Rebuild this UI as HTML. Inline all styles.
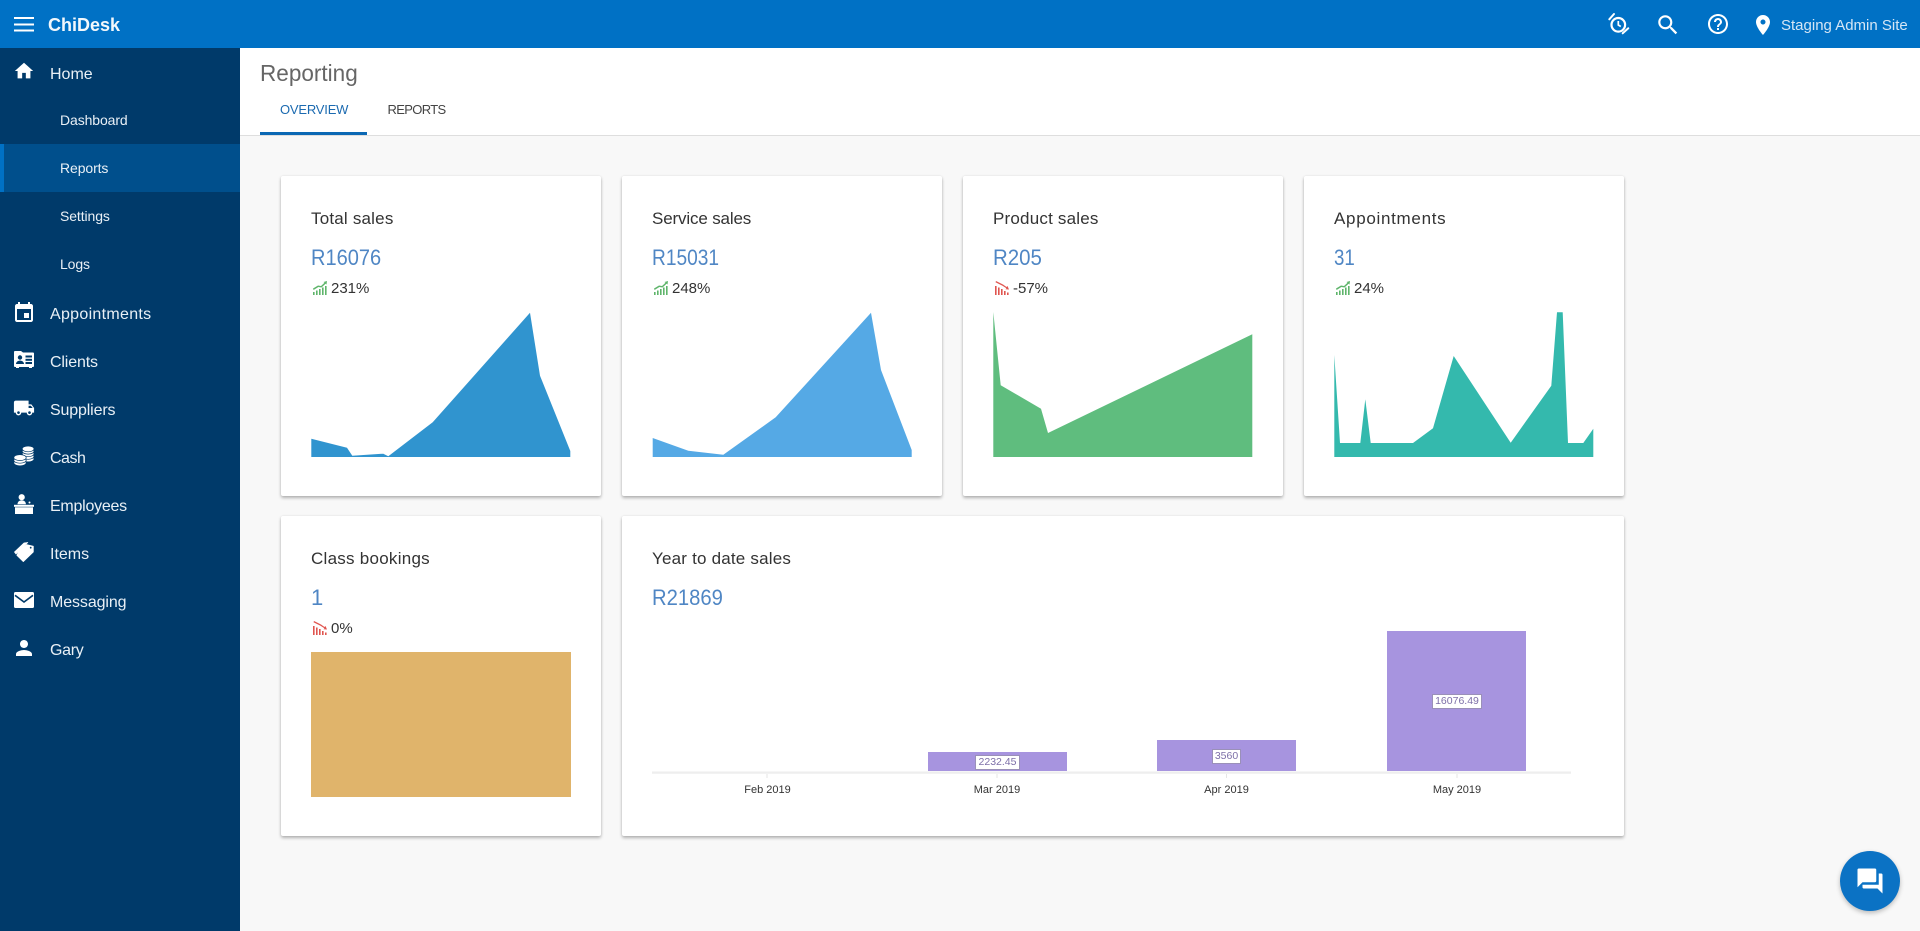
<!DOCTYPE html>
<html lang="en">
<head>
<meta charset="utf-8">
<title>ChiDesk - Reporting</title>
<style>
*{box-sizing:border-box}
html,body{margin:0;padding:0;width:1920px;height:931px;overflow:hidden;background:#f8f8f8;font-family:"Liberation Sans",sans-serif;color:#333}
a{text-decoration:none;color:inherit}
.abs,.t{position:absolute;white-space:nowrap}
header{position:absolute;left:0;top:0;width:1920px;height:48px;background:#0071c5;color:#fff}
.brand{left:48px;top:13px;font-size:18px;line-height:24px;font-weight:bold;color:#f2f8fc}
.site{left:1781px;top:14px;font-size:15px;line-height:24px;color:#d5e6f5}
header svg,nav svg{position:absolute;fill:#fff}
nav{position:absolute;left:0;top:48px;width:240px;height:883px;background:#003a6a;color:#e9f0f6}
nav a{position:absolute;left:0;width:240px;height:48px;line-height:48px}
nav a.m{font-size:16px;padding-left:50px;padding-top:3px}
nav a.s{font-size:14px;padding-left:60px;letter-spacing:-.1px}
nav a.on{background:#004f8c;border-left:4px solid #0071c5;padding-left:56px}
.head{position:absolute;left:240px;top:48px;width:1680px;height:88px;background:#fff;border-bottom:1px solid #dedede}
.title{left:20px;top:10px;font-size:23px;line-height:30px;color:#666;transform:scaleX(.98);transform-origin:left}
.tab{top:50px;font-size:13px;line-height:24px}
.tab.on{left:40px;color:#1b6ab0;letter-spacing:-.2px}
.tab.off{left:147.500px;color:#444;letter-spacing:-.65px}
.ul{left:20px;top:84px;width:107px;height:3px;background:#0b68b4}
.card{position:absolute;background:#fff;border-radius:2px;box-shadow:0 2px 3px rgba(0,0,0,.28),0 0 2px rgba(0,0,0,.08)}
.c1{top:176px;width:320px;height:320px}
.c2{top:516px;height:320px}
.card h3{position:absolute;left:30px;top:33px;margin:0;font-size:17px;line-height:20px;font-weight:normal;color:#333;white-space:nowrap}
.val{position:absolute;left:30px;top:67px;font-size:22px;line-height:30px;color:#4f86c4;transform-origin:left;white-space:nowrap}
.chg{position:absolute;left:50px;top:103px;font-size:15px;line-height:20px;color:#333;white-space:nowrap}
.card svg.tr{position:absolute;left:32px;top:105px}
svg.over{position:absolute;left:0;top:0}
.lb{position:absolute;font-size:11px;line-height:14px;color:#333;text-align:center;width:80px;white-space:nowrap}
.bv{position:absolute;background:#fff;border:1px solid #9a90b8;font-size:10.500px;line-height:13px;height:15px;color:#7d6fa8;text-align:center;white-space:nowrap}
.fab{position:absolute;left:1840px;top:851px;width:60px;height:60px;border-radius:50%;background:#0b72c4;box-shadow:0 2px 5px rgba(0,0,0,.25)}
</style>
</head>
<body>

<header>
  <svg style="left:14px;top:17px" width="20" height="15" viewBox="0 0 20 15"><rect y="0" width="20" height="2"/><rect y="6.500" width="20" height="2"/><rect y="12.500" width="20" height="2"/></svg>
  <span class="t brand">ChiDesk</span>
  <svg style="left:1606px;top:12px;fill:none;stroke:#fff" width="24" height="24" viewBox="0 0 24 24" stroke-width="2.200"><circle cx="12.300" cy="12.800" r="6.800"/><path d="M12.300 9v4l2.500 1.500" stroke-width="1.700"/><path d="M3.300 7.300 8 2M16.700 21.300 22.300 16.300" stroke-width="2" stroke-linecap="round"/></svg>
  <svg style="left:1655px;top:12px" width="26" height="26" viewBox="0 0 24 24"><path d="M15.500 14h-.79l-.28-.27C15.410 12.590 16 11.110 16 9.500 16 5.910 13.090 3 9.500 3S3 5.910 3 9.500 5.910 16 9.500 16c1.610 0 3.090-.59 4.230-1.570l.27.28v.79l5 4.990L20.490 19l-4.990-5zm-6 0C7.010 14 5 11.990 5 9.500S7.010 5 9.500 5 14 7.010 14 9.500 11.990 14 9.500 14z"/></svg>
  <svg style="left:1706px;top:12px" width="24" height="24" viewBox="0 0 24 24"><path d="M11 18h2v-2h-2v2zm1-16C6.480 2 2 6.480 2 12s4.480 10 10 10 10-4.480 10-10S17.520 2 12 2zm0 18c-4.410 0-8-3.590-8-8s3.590-8 8-8 8 3.590 8 8-3.590 8-8 8zm0-14c-2.210 0-4 1.790-4 4h2c0-1.100.9-2 2-2s2 .9 2 2c0 2-3 1.750-3 5h2c0-2.250 3-2.500 3-5 0-2.210-1.790-4-4-4z"/></svg>
  <svg style="left:1751px;top:13px" width="24" height="24" viewBox="0 0 24 24"><path d="M12 2C8.130 2 5 5.130 5 9c0 5.250 7 13 7 13s7-7.750 7-13c0-3.870-3.130-7-7-7zm0 9.500c-1.380 0-2.500-1.120-2.500-2.500s1.120-2.500 2.500-2.500 2.500 1.120 2.500 2.500-1.120 2.500-2.500 2.500z"/></svg>
  <span class="t site">Staging Admin Site</span>
</header>

<nav>
  <a class="m" style="top:0">Home</a>
  <svg style="left:13.200px;top:12.200px" width="22" height="22" viewBox="0 0 24 24"><path d="M10 20v-6h4v6h5v-8h3L12 3 2 12h3v8z"/></svg>
  <a class="s" style="top:48px">Dashboard</a>
  <a class="s on" style="top:96px">Reports</a>
  <a class="s" style="top:144px">Settings</a>
  <a class="s" style="top:192px">Logs</a>

  <a class="m" style="top:240px;letter-spacing:.3px">Appointments</a>
  <svg style="left:12px;top:253px" width="24" height="24" viewBox="0 0 24 24"><path d="M17 12h-5v5h5v-5zM19 3h-1V1h-2v2H8V1H6v2H5c-1.110 0-1.990.9-1.990 2L3 19c0 1.100.89 2 2 2h14c1.100 0 2-.9 2-2V5c0-1.100-.9-2-2-2zm0 16H5V8h14v11z"/></svg>

  <a class="m" style="top:288px;letter-spacing:-.15px">Clients</a>
  <svg style="left:14px;top:303px" width="20" height="18" viewBox="0 0 20 18"><path d="M1 0h6l2 1.500h10c.6 0 1 .4 1 1V15c0 .6-.4 1-1 1h-1v1h-3v-1H5v1H2v-1H1c-.6 0-1-.4-1-1V1c0-.6.4-1 1-1z"/><g fill="#003a6a"><circle cx="6" cy="6.500" r="2.200"/><path d="M2 13c0-2.200 2-3.400 4-3.400s4 1.200 4 3.400z"/><rect x="11.500" y="4.500" width="6.500" height="2"/><rect x="11.500" y="7.800" width="6.500" height="2"/><rect x="11.500" y="11" width="6.500" height="2"/></g></svg>

  <a class="m" style="top:336px;letter-spacing:-.15px">Suppliers</a>
  <svg style="left:13px;top:349px" width="22" height="22" viewBox="0 0 24 24"><path d="M20 8h-3V4H3c-1.100 0-2 .9-2 2v11h2c0 1.660 1.340 3 3 3s3-1.340 3-3h6c0 1.660 1.340 3 3 3s3-1.340 3-3h2v-5l-3-4zM6 18.500c-.83 0-1.500-.67-1.500-1.500s.67-1.500 1.500-1.500 1.500.67 1.500 1.500-.67 1.500-1.500 1.500zm13.500-9l1.960 2.500H17V9.500h2.500zm-1.500 9c-.83 0-1.500-.67-1.500-1.500s.67-1.500 1.500-1.500 1.500.67 1.500 1.500-.67 1.500-1.500 1.500z"/></svg>

  <a class="m" style="top:384px;letter-spacing:-.5px">Cash</a>
  <svg style="left:14px;top:398px" width="20" height="20" viewBox="0 0 20 20" stroke="#003a6a" stroke-width=".7"><ellipse cx="14.100" cy="13" rx="5.900" ry="2.900"/><ellipse cx="14.100" cy="10.400" rx="5.900" ry="2.900"/><ellipse cx="14.100" cy="7.800" rx="5.900" ry="2.900"/><ellipse cx="14.100" cy="5.200" rx="5.900" ry="2.900"/><ellipse cx="14.100" cy="2.900" rx="5.900" ry="2.900"/><ellipse cx="6" cy="16.800" rx="6.200" ry="3"/><ellipse cx="6" cy="14.200" rx="6.200" ry="3"/><ellipse cx="6" cy="11.600" rx="6.200" ry="3"/></svg>

  <a class="m" style="top:432px;letter-spacing:-.25px">Employees</a>
  <svg style="left:14px;top:446px" width="20" height="20" viewBox="0 0 20 20"><circle cx="7.700" cy="3.200" r="3.100"/><path d="M3.500 10.300c0-2.600 1.800-3.900 4.200-3.900s4.200 1.300 4.200 3.900z"/><circle cx="15.500" cy="8.500" r="1"/><rect x="0" y="10.800" width="20" height="2"/><rect x="1" y="13.300" width="18" height="6.700"/></svg>

  <a class="m" style="top:480px">Items</a>
  <svg style="left:14px;top:493.700px" width="20" height="20" viewBox="0 0 20 20" stroke-linejoin="round"><path stroke="#fff" stroke-width=".8" d="M.5 10 10 1 13.800.5 7 6.700 2 12z"/><path fill-rule="evenodd" stroke="#fff" stroke-width=".8" d="M5.300 8.300 12.700 2.600 19.300 4.300V10L9.300 19.600 2.900 13.300zM16.700 4.400a1.300 1.300 0 1 0 .01 0z"/></svg>

  <a class="m" style="top:528px;letter-spacing:-.1px">Messaging</a>
  <svg style="left:14px;top:544px" width="20" height="16" viewBox="0 0 20 16"><rect width="20" height="16" rx="1.500"/><path d="M1 3.300 10 10 19 3.300" fill="none" stroke="#003a6a" stroke-width="1.600"/></svg>

  <a class="m" style="top:576px;letter-spacing:-.3px">Gary</a>
  <svg style="left:12px;top:588px" width="24" height="24" viewBox="0 0 24 24"><path d="M12 12c2.210 0 4-1.790 4-4s-1.790-4-4-4-4 1.790-4 4 1.790 4 4 4zm0 2c-2.670 0-8 1.340-8 4v2h16v-2c0-2.660-5.330-4-8-4z"/></svg>
</nav>

<div class="head">
  <div class="t title">Reporting</div>
  <a class="t tab on">OVERVIEW</a>
  <a class="t tab off">REPORTS</a>
  <div class="abs ul"></div>
</div>

<div class="card c1" style="left:281px">
  <h3 style="letter-spacing:.2px">Total sales</h3>
  <div class="val" style="transform:scaleX(.91)">R16076</div>
  <svg class="tr" width="14" height="14" viewBox="0 0 14 14" fill="#5fb56b"><rect x="0" y="11" width="1.600" height="3"/><rect x="3" y="9.500" width="1.600" height="4.500"/><rect x="6" y="8" width="1.600" height="6"/><rect x="9" y="6.500" width="1.600" height="7.500"/><rect x="12" y="5" width="1.600" height="9"/><path d="M0 7.500 5 4.500 8 5 11.500 1.800 10.500 1 14 0 13.500 3.500 12.600 2.700 8.500 6.500 5.400 6 .6 9z"/></svg>
  <div class="chg">231%</div>
</div>
<div class="card c1" style="left:622px">
  <h3 style="letter-spacing:-.15px">Service sales</h3>
  <div class="val" style="transform:scaleX(.87)">R15031</div>
  <svg class="tr" width="14" height="14" viewBox="0 0 14 14" fill="#5fb56b"><rect x="0" y="11" width="1.600" height="3"/><rect x="3" y="9.500" width="1.600" height="4.500"/><rect x="6" y="8" width="1.600" height="6"/><rect x="9" y="6.500" width="1.600" height="7.500"/><rect x="12" y="5" width="1.600" height="9"/><path d="M0 7.500 5 4.500 8 5 11.500 1.800 10.500 1 14 0 13.500 3.500 12.600 2.700 8.500 6.500 5.400 6 .6 9z"/></svg>
  <div class="chg">248%</div>
</div>
<div class="card c1" style="left:963px">
  <h3 style="letter-spacing:.2px">Product sales</h3>
  <div class="val" style="transform:scaleX(.93)">R205</div>
  <svg class="tr" width="14" height="14" viewBox="0 0 14 14" fill="#e0554f"><rect x="0" y="5" width="1.600" height="9"/><rect x="3" y="6.500" width="1.600" height="7.500"/><rect x="6" y="8" width="1.600" height="6"/><rect x="9" y="10" width="1.600" height="4"/><rect x="12" y="11.500" width="1.600" height="2.500"/><path d="M1 0 5 2 8 3.500 11.500 6 12.500 5 14 8.500 10.500 8.200 11.400 7.300 7.500 4.800 4.500 3.300.5 1.300z"/></svg>
  <div class="chg">-57%</div>
</div>
<div class="card c1" style="left:1304px">
  <h3 style="letter-spacing:.7px">Appointments</h3>
  <div class="val" style="transform:scaleX(.85)">31</div>
  <svg class="tr" width="14" height="14" viewBox="0 0 14 14" fill="#5fb56b"><rect x="0" y="11" width="1.600" height="3"/><rect x="3" y="9.500" width="1.600" height="4.500"/><rect x="6" y="8" width="1.600" height="6"/><rect x="9" y="6.500" width="1.600" height="7.500"/><rect x="12" y="5" width="1.600" height="9"/><path d="M0 7.500 5 4.500 8 5 11.500 1.800 10.500 1 14 0 13.500 3.500 12.600 2.700 8.500 6.500 5.400 6 .6 9z"/></svg>
  <div class="chg">24%</div>
</div>
<div class="card c2" style="left:281px;width:320px">
  <h3 style="letter-spacing:.26px">Class bookings</h3>
  <div class="val">1</div>
  <svg class="tr" width="14" height="14" viewBox="0 0 14 14" fill="#e0554f"><rect x="0" y="5" width="1.600" height="9"/><rect x="3" y="6.500" width="1.600" height="7.500"/><rect x="6" y="8" width="1.600" height="6"/><rect x="9" y="10" width="1.600" height="4"/><rect x="12" y="11.500" width="1.600" height="2.500"/><path d="M1 0 5 2 8 3.500 11.500 6 12.500 5 14 8.500 10.500 8.200 11.400 7.300 7.500 4.800 4.500 3.300.5 1.300z"/></svg>
  <div class="chg">0%</div>
</div>
<div class="card c2" style="left:622px;width:1002px">
  <h3 style="letter-spacing:.2px">Year to date sales</h3>
  <div class="val" style="transform:scaleX(.92)">R21869</div>
</div>

<svg class="over" width="1920" height="931" viewBox="0 0 1920 931">
  <polygon fill="#3094cf" points="311.300,438.700 347,447.700 352.300,455.700 383.300,453.700 388.300,456.300 432.700,422.300 530,312.700 540,375.700 570.300,451 570.300,457 311.300,457"/>
  <polygon fill="#55a9e5" points="652.700,438 688.300,450.700 723.300,454.700 775.700,417.300 871,312.700 881,370 911.700,450 911.700,457 652.700,457"/>
  <polygon fill="#5fbd7e" points="993.300,312 1000.700,385.300 1041,408.700 1048,433 1252.300,334.300 1252.300,457 993.300,457"/>
  <polygon fill="#34b9ad" points="1334.300,355 1340,443 1360.300,443 1365.300,399.300 1370.700,443 1413,443 1433,428.300 1453.700,356 1510.700,442.700 1551.300,385.700 1557,312.300 1562.700,312.300 1568,443 1583.300,443 1593.300,428.700 1593.300,457 1334.300,457"/>
  <rect x="311" y="652" width="260" height="145" fill="#e0b46b"/>
  <rect x="652" y="771.500" width="919" height="2.300" fill="#eeeeee"/>
  <g stroke="#e6e6e6" stroke-width="1"><path d="M767 774v4M997 774v4M1226.500 774v4M1457 774v4"/></g>
  <rect x="928" y="752" width="139" height="19" fill="#a794df"/>
  <rect x="1157" y="740" width="139" height="31" fill="#a794df"/>
  <rect x="1387" y="631" width="139" height="140" fill="#a794df"/>
</svg>

<div class="bv" style="left:975px;top:754.500px;width:45px">2232.45</div>
<div class="bv" style="left:1212px;top:749px;width:29px">3560</div>
<div class="bv" style="left:1432px;top:694px;width:50px">16076.49</div>
<div class="lb" style="left:727.500px;top:783px">Feb 2019</div>
<div class="lb" style="left:957px;top:783px">Mar 2019</div>
<div class="lb" style="left:1186.500px;top:783px">Apr 2019</div>
<div class="lb" style="left:1417px;top:783px">May 2019</div>

<div class="fab">
  <svg style="position:absolute;left:15px;top:15px" width="30" height="30" viewBox="0 0 24 24" fill="#fff"><path d="M21 6h-2v9H6v2c0 .55.45 1 1 1h11l4 4V7c0-.55-.45-1-1-1zm-4 6V3c0-.55-.45-1-1-1H3c-.55 0-1 .45-1 1v14l4-4h10c.55 0 1-.45 1-1z"/></svg>
</div>

</body>
</html>
